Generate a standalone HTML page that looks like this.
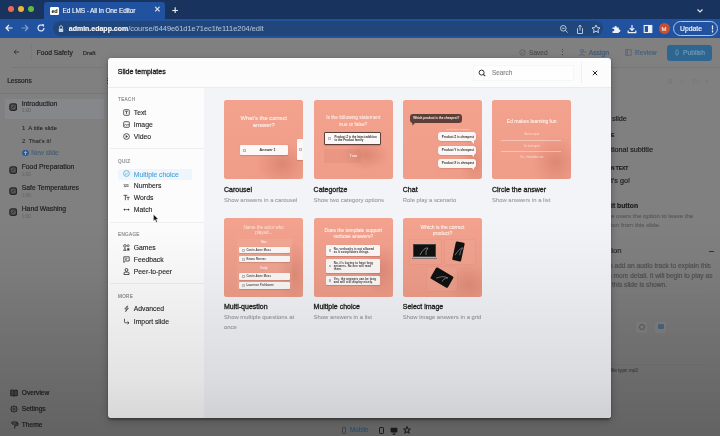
<!DOCTYPE html>
<html><head><meta charset="utf-8">
<style>
*{margin:0;padding:0;box-sizing:border-box}
html,body{width:720px;height:436px;overflow:hidden;background:#888}
body{font-family:"Liberation Sans",sans-serif;position:relative;-webkit-text-stroke:0.18px currentColor}
.a{position:absolute;white-space:nowrap}
#tabs{left:0;top:0;width:720px;height:19px;background:#19335f}
#tab{left:44.3px;top:2.4px;width:121px;height:17.5px;background:#2152a0;border-radius:3px 3px 0 0}
#toolbar{left:0;top:19px;width:720px;height:18.5px;background:#2152a0}
#omni{left:53px;top:21px;width:550px;height:15px;background:#20467a;border-radius:8px}
.dot{width:6.5px;height:6.5px;border-radius:50%;top:5.8px}
#page{left:0;top:37.5px;width:720px;height:399px;background:#808080}
.t{color:#1e1e1e}
.card{border-radius:2.5px;overflow:hidden}
.lab{font-size:4.6px;line-height:6px;color:#8c8f94;letter-spacing:0.35px}
.ns{-webkit-text-stroke:0}
</style></head><body><div id="root" style="position:absolute;left:0;top:0;width:720px;height:436px;overflow:hidden;filter:blur(0.3px)">
<!-- Browser chrome -->
<div class="a" id="tabs"></div>
<div class="a dot" style="left:7.8px;background:#ec6a53"></div>
<div class="a dot" style="left:17.8px;background:#f0b43c"></div>
<div class="a dot" style="left:27.8px;background:#5fb942"></div>
<div class="a" id="tab"></div>
<div class="a ns" style="left:50px;top:6.5px;width:8.6px;height:8.5px;background:#fff;border-radius:1.2px;font-size:5.6px;font-weight:bold;color:#111;line-height:8.5px;text-align:center;letter-spacing:-0.4px">ed</div>
<div class="a" style="left:62.5px;top:5.5px;font-size:6.6px;color:#f4f7fb;line-height:9px;letter-spacing:-0.16px;-webkit-text-stroke:0.12px #f4f7fb">Ed LMS - All In One Editor</div>
<div class="a" style="left:154px;top:5px;font-size:8px;color:#dfe6f2;line-height:10px">&#x2715;</div>
<div class="a" style="left:172px;top:3.5px;font-size:11px;color:#e8eef8;line-height:12px">+</div>
<svg class="a" style="left:696px;top:8px" width="8" height="6" viewBox="0 0 8 6"><path d="M1.5 1.5 L4 4 L6.5 1.5" stroke="#dfe6f2" stroke-width="1.2" fill="none"/></svg>
<div class="a" id="toolbar"></div>
<!-- nav icons -->
<svg class="a" style="left:4px;top:23px" width="10" height="10" viewBox="0 0 10 10"><path d="M8.5 5 H2 M5 2 L2 5 L5 8" stroke="#e6ecf6" stroke-width="1.2" fill="none"/></svg>
<svg class="a" style="left:20px;top:23px" width="10" height="10" viewBox="0 0 10 10"><path d="M1.5 5 H8 M5 2 L8 5 L5 8" stroke="#7f9cc9" stroke-width="1.2" fill="none"/></svg>
<svg class="a" style="left:36px;top:23px" width="10" height="10" viewBox="0 0 10 10"><path d="M8 5 A3 3 0 1 1 6.5 2.4" stroke="#e6ecf6" stroke-width="1.2" fill="none"/><path d="M5.5 1 L8.2 1.6 L7.6 4.2 Z" fill="#e6ecf6"/></svg>
<div class="a" id="omni"></div>
<svg class="a" style="left:58px;top:24.5px" width="6" height="8" viewBox="0 0 6 8"><path d="M1.5 3.5 V2.3 A1.5 1.5 0 0 1 4.5 2.3 V3.5" stroke="#c9d3e4" stroke-width="0.9" fill="none"/><rect x="0.8" y="3.4" width="4.4" height="3.6" rx="0.6" fill="#c9d3e4"/></svg>
<div class="a" style="left:68.75px;top:23.5px;font-size:7px;line-height:10px;color:#f4f7fc"><b>admin.edapp.com</b><span style="color:#b4c3dc;font-size:7.4px;-webkit-text-stroke:0.05px #b4c3dc">/course/6449e61d1e71ec1fe111e204/edit</span></div>
<!-- right toolbar icons -->
<svg class="a" style="left:559px;top:24px" width="10" height="10" viewBox="0 0 10 10"><circle cx="4.3" cy="4.3" r="2.8" stroke="#b8c6de" stroke-width="1" fill="none"/><path d="M6.3 6.3 L8.6 8.6 M3 4.3 H5.6" stroke="#b8c6de" stroke-width="1"/></svg>
<svg class="a" style="left:575px;top:23.5px" width="10" height="11" viewBox="0 0 10 11"><path d="M3 4.5 H2.5 V9.5 H7.5 V4.5 H7 M5 1.2 V6.5 M3.3 2.8 L5 1.2 L6.7 2.8" stroke="#b8c6de" stroke-width="1" fill="none"/></svg>
<svg class="a" style="left:591px;top:23.5px" width="10" height="10" viewBox="0 0 10 10"><path d="M5 1 L6.2 3.6 L9 3.9 L6.9 5.8 L7.5 8.6 L5 7.2 L2.5 8.6 L3.1 5.8 L1 3.9 L3.8 3.6 Z" stroke="#d6deec" stroke-width="0.9" fill="none"/></svg>
<svg class="a" style="left:611px;top:23.5px" width="10" height="10" viewBox="0 0 10 10"><path d="M1.5 3.5 H3.5 A1.2 1.2 0 1 1 5.8 3.5 H7.8 V5.5 A1.2 1.2 0 1 1 7.8 7.8 V9 H1.5 V7 A1.2 1.2 0 1 0 1.5 5 Z" fill="#eef2f8"/></svg>
<svg class="a" style="left:626.5px;top:23.5px" width="10" height="10" viewBox="0 0 10 10"><path d="M5 1 V6.3 M2.8 4.2 L5 6.5 L7.2 4.2 M1.2 6.5 V8.7 H8.8 V6.5" stroke="#eef2f8" stroke-width="1.2" fill="none"/></svg>
<svg class="a" style="left:643px;top:23.5px" width="10" height="10" viewBox="0 0 10 10"><rect x="1.2" y="1.5" width="7.6" height="7" stroke="#eef2f8" stroke-width="1.1" fill="none"/><rect x="5" y="1.5" width="3.8" height="7" fill="#eef2f8"/></svg>
<div class="a" style="left:658.5px;top:22.8px;width:11px;height:11px;border-radius:50%;background:#c9502c;color:#f8e6df;font-size:6px;line-height:12px;text-align:center">M</div>
<div class="a" style="left:673px;top:20.5px;width:45px;height:15px;border-radius:8px;border:1px solid #b5c4dc"></div>
<div class="a" style="left:680px;top:23.5px;font-size:6.8px;line-height:9px;color:#eef2f8">Update</div>
<div class="a" style="left:709px;top:23.5px;font-size:7px;line-height:10px;color:#eef2f8;font-weight:bold">&#x22EE;</div>

<!-- Page (dimmed) -->
<div class="a" id="page"></div>
<!-- page header -->
<svg class="a" style="left:12.5px;top:49px" width="7" height="6" viewBox="0 0 7 6"><path d="M6 3 H1.2 M3.3 1 L1.1 3 L3.3 5" stroke="#2a2a2a" stroke-width="0.8" fill="none"/></svg>
<div class="a" style="left:30.5px;top:44px;width:0.6px;height:16px;background:#7a7a7a"></div>
<div class="a t" style="left:36.7px;top:47.5px;font-size:6.7px;line-height:9px">Food Safety</div>
<div class="a t" style="left:82.8px;top:49.2px;font-size:5.9px;line-height:9px;color:#2a2a2a">Draft</div>
<div class="a" style="left:12px;top:67px;width:90px;height:0.8px;background:#777"></div>
<div class="a t" style="left:7.2px;top:76px;font-size:6.6px;line-height:9px">Lessons</div>
<div class="a" style="left:103.8px;top:76.5px;font-size:7px;line-height:8px;color:#333">&#x22EE;</div>
<div class="a" style="left:0;top:93.3px;width:106px;height:0.8px;background:#777"></div>
<!-- lessons -->
<div class="a" style="left:5px;top:98.5px;width:99px;height:20px;background:#85878a"></div>
<svg class="a" style="left:8.8px;top:102.6px" width="8.4" height="8" viewBox="0 0 8.4 8"><rect x="0.9" y="0.9" width="6.6" height="6.4" rx="1.8" stroke="#262626" stroke-width="1.3" fill="#555"/><path d="M2.8 5.3 L5.6 2.5" stroke="#262626" stroke-width="0.9"/></svg>
<div class="a t" style="left:21.7px;top:99.9px;font-size:6.8px;line-height:8px">Introduction</div>
<div class="a" style="left:21.7px;top:108.4px;font-size:4.8px;line-height:6px;color:#6c6c6c">1:00</div>
<div class="a t" style="left:22px;top:123.6px;font-size:6px;line-height:8px;-webkit-text-stroke:0.05px currentColor">1&nbsp; A title slide</div>
<div class="a t" style="left:22px;top:136.6px;font-size:6px;line-height:8px;-webkit-text-stroke:0.05px currentColor">2&nbsp; That's it!</div>
<div class="a" style="left:21.8px;top:149.5px;width:6.8px;height:6.8px;border-radius:50%;background:#2c5c98"></div><div class="a" style="left:24.7px;top:151.2px;width:1px;height:3.4px;background:#8aa6c6"></div><div class="a" style="left:23.5px;top:152.4px;width:3.4px;height:1px;background:#8aa6c6"></div>
<div class="a" style="left:31.3px;top:149px;font-size:6.3px;line-height:8px;color:#4b5f78">New slide</div>
<svg class="a" style="left:8.8px;top:165.7px" width="8.4" height="8" viewBox="0 0 8.4 8"><rect x="0.9" y="0.9" width="6.6" height="6.4" rx="1.8" stroke="#262626" stroke-width="1.3" fill="#555"/><path d="M2.8 5.3 L5.6 2.5" stroke="#262626" stroke-width="0.9"/></svg>
<div class="a t" style="left:21.7px;top:163.0px;font-size:6.8px;line-height:8px">Food Preparation</div>
<div class="a" style="left:21.7px;top:171.5px;font-size:4.8px;line-height:6px;color:#6c6c6c">1:00</div>
<svg class="a" style="left:8.8px;top:186.7px" width="8.4" height="8" viewBox="0 0 8.4 8"><rect x="0.9" y="0.9" width="6.6" height="6.4" rx="1.8" stroke="#262626" stroke-width="1.3" fill="#555"/><path d="M2.8 5.3 L5.6 2.5" stroke="#262626" stroke-width="0.9"/></svg>
<div class="a t" style="left:21.7px;top:184.0px;font-size:6.8px;line-height:8px">Safe Temperatures</div>
<div class="a" style="left:21.7px;top:192.5px;font-size:4.8px;line-height:6px;color:#6c6c6c">1:00</div>
<svg class="a" style="left:8.8px;top:207.7px" width="8.4" height="8" viewBox="0 0 8.4 8"><rect x="0.9" y="0.9" width="6.6" height="6.4" rx="1.8" stroke="#262626" stroke-width="1.3" fill="#555"/><path d="M2.8 5.3 L5.6 2.5" stroke="#262626" stroke-width="0.9"/></svg>
<div class="a t" style="left:21.7px;top:205.0px;font-size:6.8px;line-height:8px">Hand Washing</div>
<div class="a" style="left:21.7px;top:213.5px;font-size:4.8px;line-height:6px;color:#6c6c6c">1:00</div>

<svg class="a" style="left:10px;top:388.8px" width="8" height="8" viewBox="0 0 8 8"><path d="M0.7 1.2 Q2.3 0.6 4 1.6 Q5.7 0.6 7.3 1.2 V6.8 Q5.7 6.2 4 7.2 Q2.3 6.2 0.7 6.8 Z M4 1.6 V7.2" stroke="#262626" stroke-width="0.9" fill="#4a4a4a"/></svg>
<div class="a t" style="left:21.8px;top:389px;font-size:6.6px;line-height:8px">Overview</div>
<svg class="a" style="left:10px;top:405.3px" width="8" height="8" viewBox="0 0 8 8"><path d="M4 0.6 L5 1.9 L6.6 1.7 L6.4 3.3 L7.5 4 L6.4 4.7 L6.6 6.3 L5 6.1 L4 7.4 L3 6.1 L1.4 6.3 L1.6 4.7 L0.5 4 L1.6 3.3 L1.4 1.7 L3 1.9 Z" stroke="#262626" stroke-width="0.9" fill="none"/><circle cx="4" cy="4" r="1.1" stroke="#262626" stroke-width="0.8" fill="none"/></svg>
<div class="a t" style="left:21.8px;top:405px;font-size:6.6px;line-height:8px">Settings</div>
<svg class="a" style="left:10.5px;top:421px" width="8" height="8" viewBox="0 0 8 8"><path d="M1 1 H6 V3 H1 Z M6 2 H7 V4.3 H3.8 V7.5" stroke="#262626" stroke-width="1" fill="none"/></svg>
<div class="a t" style="left:21.8px;top:421px;font-size:6.6px;line-height:8px">Theme</div>
<!-- header right -->
<svg class="a" style="left:518.5px;top:48.8px" width="7" height="7" viewBox="0 0 7 7"><circle cx="3.5" cy="3.5" r="2.8" stroke="#5a5a5a" stroke-width="0.7" fill="none"/><path d="M2 3.6 L3.1 4.6 L5 2.6" stroke="#5a5a5a" stroke-width="0.7" fill="none"/></svg>
<div class="a" style="left:529px;top:49.2px;font-size:6.6px;line-height:8px;color:#4a4a4a;-webkit-text-stroke:0.1px #4a4a4a">Saved</div>
<div class="a" style="left:559px;top:48px;font-size:7px;line-height:8px;color:#3a3a3a">&#x22EE;</div>
<svg class="a" style="left:578.5px;top:49px" width="8" height="7" viewBox="0 0 8 7"><circle cx="3" cy="2" r="1.5" stroke="#3f5c7a" stroke-width="0.7" fill="none"/><path d="M0.5 6.5 Q3 3.5 5.5 6.5 M5.5 3 H7.5" stroke="#3f5c7a" stroke-width="0.7" fill="none"/></svg>
<div class="a" style="left:588.7px;top:49px;font-size:6.8px;line-height:8px;color:#3f5a78">Assign</div>
<svg class="a" style="left:625px;top:49px" width="7" height="7" viewBox="0 0 7 7"><rect x="0.8" y="0.8" width="5.4" height="5.4" stroke="#46607c" stroke-width="0.7" fill="none"/><path d="M2.3 0.8 V6.2" stroke="#46607c" stroke-width="0.7"/></svg>
<div class="a" style="left:635px;top:49px;font-size:6.6px;line-height:8px;color:#46607c">Review</div>
<div class="a" style="left:667px;top:44.6px;width:45px;height:16px;border-radius:3px;background:#2c6691"></div>
<svg class="a" style="left:673.5px;top:49px" width="6" height="7" viewBox="0 0 6 7"><path d="M3 0.5 Q5.5 2.5 3.8 6 H2.2 Q0.5 2.5 3 0.5 Z" stroke="#7fa3c0" stroke-width="0.6" fill="none"/></svg>
<div class="a" style="left:683px;top:49px;font-size:6.7px;line-height:8px;color:#759cba">Publish</div>
<div class="a" style="left:607px;top:67px;width:113px;height:0.8px;background:#777"></div>
<!-- right panel fragments -->
<div class="a" style="left:668px;top:77.5px;font-size:6.5px;line-height:8px;color:#7a7a7a;font-weight:bold">B</div>
<div class="a" style="left:681px;top:77.5px;font-size:6.5px;line-height:8px;color:#7a7a7a;font-style:italic">I</div>
<div class="a" style="left:692px;top:77.5px;font-size:6.5px;line-height:8px;color:#7a7a7a">T<span style="font-size:5px">T</span></div>
<div class="a" style="left:705px;top:77.5px;font-size:6.5px;line-height:8px;color:#7a7a7a">&#x2261;</div>
<div class="a t" style="left:612px;top:114.6px;font-size:7.2px;line-height:8px">slide</div>
<div class="a t" style="left:611px;top:131.5px;font-size:5px;line-height:7px;font-weight:bold">E</div>
<div class="a t" style="left:611px;top:145.6px;font-size:7.2px;line-height:8px">tional subtitle</div>
<div class="a t" style="left:611px;top:165px;font-size:4.8px;line-height:7px;font-weight:bold">N TEXT</div>
<div class="a t" style="left:611px;top:176.6px;font-size:7.2px;line-height:8px">t's go!</div>
<div class="a t" style="left:611px;top:202px;font-size:6.8px;line-height:8px;font-weight:bold">it button</div>
<div class="a" style="left:611px;top:212px;font-size:6.15px;line-height:8px;color:#5c5c5c">e users the option to leave the</div>
<div class="a" style="left:611px;top:221px;font-size:6.15px;line-height:8px;color:#5c5c5c">ion from this slide.</div>
<div class="a t" style="left:609px;top:246px;font-size:7.8px;line-height:9px;-webkit-text-stroke:0.1px currentColor">tion</div>
<div class="a" style="left:709px;top:250.5px;width:5px;height:0.9px;background:#333"></div>
<div class="a" style="left:609px;top:262.3px;font-size:6.6px;line-height:8px;color:#505050">o add an audio track to explain this</div>
<div class="a" style="left:608px;top:271.8px;font-size:6.6px;line-height:8px;color:#505050">n more detail. It will begin to play as</div>
<div class="a" style="left:612px;top:280.5px;font-size:6.6px;line-height:8px;color:#505050">this slide is shown.</div>
<div class="a" style="left:611px;top:292px;width:98px;height:73px;border:0.6px solid #7c7c7c;border-left:none;border-top-color:#828282;border-right-color:#808080"></div><div class="a" style="left:636px;top:322px;width:11px;height:11px;background:rgba(255,255,255,0.05);border-radius:1px"></div><div class="a" style="left:655px;top:322px;width:11px;height:11px;background:rgba(255,255,255,0.05);border-radius:1px"></div>
<div class="a" style="left:639px;top:324px;width:6px;height:6px;border-radius:50%;border:0.6px solid #5a5a5a"></div>
<div class="a" style="left:658px;top:324px;width:6px;height:5px;background:#4f6a80;border-radius:1px"></div>
<div class="a" style="left:611px;top:367.5px;font-size:4.5px;line-height:6px;color:#505050">file type: mp3</div>
<!-- bottom device bar -->
<div class="a" style="left:342px;top:427px;width:4px;height:7px;border:0.6px solid #555;border-radius:1px"></div>
<div class="a" style="left:350px;top:426px;font-size:6.3px;line-height:8px;color:#3d6587;-webkit-text-stroke:0.15px #3d6587">Mobile</div>
<div class="a" style="left:379px;top:427px;width:5px;height:7px;border:0.9px solid #222;border-radius:1.2px"></div>
<svg class="a" style="left:389.5px;top:426.5px" width="8" height="8" viewBox="0 0 8 8"><rect x="0.6" y="0.8" width="6.8" height="4.6" rx="0.8" fill="#222"/><path d="M4 5.4 V7 M2.5 7.3 H5.5" stroke="#222" stroke-width="0.9"/></svg>
<svg class="a" style="left:402.5px;top:426px" width="8" height="8" viewBox="0 0 10 10"><path d="M5 1 L6.2 3.6 L9 3.9 L6.9 5.8 L7.5 8.6 L5 7.2 L2.5 8.6 L3.1 5.8 L1 3.9 L3.8 3.6 Z" stroke="#222" stroke-width="1.3" fill="none"/></svg>



<div class="a" style="left:0;top:37.5px;width:720px;height:399px;pointer-events:none;background:linear-gradient(to bottom, rgba(0,0,0,0) 0%, rgba(0,0,0,0) 45%, rgba(0,0,0,0.03) 57%, rgba(0,0,0,0.12) 75%, rgba(0,0,0,0.21) 95%, rgba(0,0,0,0.23) 100%)"></div>


<!-- MODAL -->
<div class="a" id="modal" style="left:108px;top:58px;width:503px;height:360px;background:#fcfcfd;border-radius:3px;box-shadow:0 1.5px 2px rgba(0,0,0,0.3), 0 2px 8px rgba(0,0,0,0.25);overflow:hidden">
  <div class="a" style="left:96px;top:29px;width:407px;height:331px;background:#f2f4f7"></div>
  <div class="a" style="left:0;top:28.6px;width:503px;height:0.8px;background:#e9ebee"></div>
  <div class="a" style="left:2px;top:90.2px;width:94px;height:0.8px;background:#eceef0"></div>
  <div class="a" style="left:2px;top:164.2px;width:94px;height:0.8px;background:#eceef0"></div>
  <div class="a" style="left:2px;top:225.4px;width:94px;height:0.8px;background:#eceef0"></div>
</div>
<div class="a" style="left:117.8px;top:67.2px;font-size:7px;line-height:9px;color:#1f1f1f;-webkit-text-stroke:0.32px #1f1f1f">Slide templates</div>
<div class="a" style="left:472.5px;top:64.5px;width:101px;height:16px;border:0.7px solid #f5f6f7;border-radius:2px;background:#fefefe;box-shadow:0 0 1px rgba(0,0,0,0.03)"></div>
<svg class="a" style="left:478px;top:68.5px" width="8" height="8" viewBox="0 0 8 8"><circle cx="3.6" cy="3.6" r="2.5" stroke="#333" stroke-width="1" fill="none"/><path d="M5.4 5.4 L7.2 7.2" stroke="#333" stroke-width="1.1"/></svg>
<div class="a" style="left:492px;top:68px;font-size:6.4px;line-height:9px;color:#8a8d92">Search</div>
<div class="a" style="left:581px;top:62px;width:0.7px;height:21px;background:#eef0f2"></div>
<svg class="a" style="left:591.5px;top:69.5px" width="6" height="6" viewBox="0 0 6 6"><path d="M0.8 0.8 L5.2 5.2 M5.2 0.8 L0.8 5.2" stroke="#2a2a2a" stroke-width="1"/></svg>


<!-- CARDS -->
<div class="a card ns" style="left:224px;top:100.4px;width:79.4px;height:78.7px;background:radial-gradient(ellipse 26px 22px at 58px 64px, rgba(190,100,82,0.4), rgba(190,100,82,0) 100%), linear-gradient(#f3a28e,#ef9d89)"><div class="a" style="left:0px;top:14.2px;width:79.4px;text-align:center;font-size:5.8px;line-height:7.25px;color:rgba(255,244,240,0.95);white-space:normal;-webkit-text-stroke:0.1px rgba(255,244,240,0.95)">What's the correct<br>answer?</div><div class="a" style="left:15.6px;top:45px;width:48.4px;height:9.8px;background:#fbf8f7;border-radius:1px;box-shadow:0 0.5px 1px rgba(120,60,50,0.25);"><div class="a" style="left:3px;top:3.2px;width:3px;height:3px;border:0.4px solid #bbb"></div><div class="a" style="left:4px;top:2.2px;width:48px;text-align:center;font-size:3.6px;line-height:5px;font-weight:bold;color:#333">Answer 1</div></div><div class="a" style="left:72.7px;top:39px;width:8px;height:20.4px;background:#fbf8f7;border-radius:1px;box-shadow:0 0.5px 1px rgba(120,60,50,0.25);"><div class="a" style="left:2.5px;top:8.5px;width:3px;height:3px;border:0.4px solid #bbb"></div></div></div>
<div class="a card ns" style="left:313.6px;top:100.4px;width:79.4px;height:78.7px;background:radial-gradient(ellipse 24px 15px at 52px 55px, rgba(190,100,82,0.4), rgba(190,100,82,0) 100%), linear-gradient(#f3a28e,#ef9d89)"><div class="a" style="left:0px;top:14.8px;width:79.4px;text-align:center;font-size:4.8px;line-height:6.4px;color:rgba(255,244,240,0.95);white-space:normal;-webkit-text-stroke:0.05px rgba(255,244,240,0.95)">Is the following statement<br>true or false?</div><div class="a" style="left:10.5px;top:48.6px;width:37px;height:14px;background:rgba(200,110,95,0.16);filter:blur(0.5px)"></div><div class="a" style="left:0px;top:53.6px;width:79.4px;text-align:center;font-size:3.8px;line-height:4.75px;color:rgba(255,235,230,0.9);white-space:normal;-webkit-text-stroke:0.1px rgba(255,235,230,0.9)">True</div><div class="a" style="left:10.9px;top:32.1px;width:57px;height:12.7px;background:#fbf8f7;border-radius:1px;box-shadow:0 0.5px 1px rgba(120,60,50,0.25);border:0.9px solid #5b3f38"><div class="a" style="left:3px;top:4px;width:3px;height:3px;border:0.4px solid #bbb"></div><div class="a" style="left:9px;top:2.2px;font-size:2.9px;line-height:3.6px;font-weight:bold;color:#333;white-space:normal;width:44px">Product Z is the latest addition to the Product family</div></div></div>
<div class="a card ns" style="left:402.8px;top:100.4px;width:79.4px;height:78.7px;background:radial-gradient(ellipse 16px 28px at 72px 62px, rgba(190,100,82,0.3), rgba(190,100,82,0) 100%), linear-gradient(#f3a28e,#ef9d89)"><div class="a" style="left:7.3px;top:13.4px;width:51.5px;height:9px;background:#5e3f37;border-radius:3px"></div><svg class="a" style="left:9px;top:22px" width="4" height="4" viewBox="0 0 4 4"><path d="M0 0 H4 L0.5 3.5 Z" fill="#5e3f37"/></svg><div class="a" style="left:10.5px;top:15.5px;font-size:3.05px;line-height:5px;color:#f5e8e4;font-weight:bold">Which product is the cheapest?</div><div class="a" style="left:43px;top:27.5px;font-size:2.4px;line-height:3px;color:rgba(255,240,235,0.8)">What Z three available</div><div class="a" style="left:35.6px;top:32px;width:37.3px;height:9px;background:#fbf6f4;border-radius:3px;box-shadow:0 0.5px 1px rgba(120,60,50,0.3)"></div><svg class="a" style="left:68px;top:40.5px" width="3" height="3" viewBox="0 0 3 3"><path d="M0 0 H3 V3 Z" fill="#fbf6f4"/></svg><div class="a" style="left:35.6px;top:45.2px;width:37.3px;height:9px;background:#fbf6f4;border-radius:3px;box-shadow:0 0.5px 1px rgba(120,60,50,0.3)"></div><svg class="a" style="left:68px;top:53.7px" width="3" height="3" viewBox="0 0 3 3"><path d="M0 0 H3 V3 Z" fill="#fbf6f4"/></svg><div class="a" style="left:35.6px;top:58.4px;width:37.3px;height:9px;background:#fbf6f4;border-radius:3px;box-shadow:0 0.5px 1px rgba(120,60,50,0.3)"></div><svg class="a" style="left:68px;top:66.9px" width="3" height="3" viewBox="0 0 3 3"><path d="M0 0 H3 V3 Z" fill="#fbf6f4"/></svg><div class="a" style="left:39px;top:34.2px;font-size:3.1px;line-height:4.5px;color:#333;font-weight:bold">Product Z is cheapest</div><div class="a" style="left:39px;top:47.400000000000006px;font-size:3.1px;line-height:4.5px;color:#333;font-weight:bold">Product Y is cheapest</div><div class="a" style="left:39px;top:60.6px;font-size:3.1px;line-height:4.5px;color:#333;font-weight:bold">Product X is cheapest</div></div>
<div class="a card ns" style="left:492px;top:100.4px;width:79.4px;height:78.7px;background:radial-gradient(ellipse 24px 26px at 64px 62px, rgba(190,100,82,0.38), rgba(190,100,82,0) 100%), linear-gradient(#f3a28e,#ef9d89)"><div class="a" style="left:0px;top:17.3px;width:79.4px;text-align:center;font-size:5.0px;line-height:6.25px;color:rgba(255,244,240,0.95);white-space:normal;-webkit-text-stroke:0.1px rgba(255,244,240,0.95)">Ed makes learning fun</div><div class="a" style="left:0px;top:32.3px;width:79.4px;text-align:center;font-size:2.6px;line-height:3.25px;color:rgba(255,240,235,0.75);white-space:normal;-webkit-text-stroke:0px rgba(255,240,235,0.75)">Start a report</div><div class="a" style="left:9px;top:39.4px;width:60px;height:0.5px;background:rgba(255,240,235,0.45)"></div><div class="a" style="left:0px;top:44.3px;width:79.4px;text-align:center;font-size:2.6px;line-height:3.25px;color:rgba(255,240,235,0.75);white-space:normal;-webkit-text-stroke:0px rgba(255,240,235,0.75)">I'm next again</div><div class="a" style="left:9px;top:50.4px;width:60px;height:0.5px;background:rgba(255,240,235,0.45)"></div><div class="a" style="left:0px;top:56.1px;width:79.4px;text-align:center;font-size:2.6px;line-height:3.25px;color:rgba(255,240,235,0.75);white-space:normal;-webkit-text-stroke:0px rgba(255,240,235,0.75)">Yes, I remember too</div></div>
<div class="a card ns" style="left:224px;top:218px;width:79.4px;height:79.2px;background:radial-gradient(ellipse 18px 30px at 70px 55px, rgba(190,100,82,0.3), rgba(190,100,82,0) 100%), linear-gradient(#f3a28e,#ef9d89)"><div class="a" style="left:0px;top:6.5px;width:79.4px;text-align:center;font-size:4.5px;line-height:5.625px;color:rgba(255,240,235,0.85);white-space:normal;-webkit-text-stroke:0px rgba(255,240,235,0.85)">Name the actor who<br>played...</div><div class="a" style="left:13.2px;top:21.2px;width:54.4px;height:50.5px;background:rgba(255,225,215,0.1);border-radius:1px"></div><div class="a" style="left:0px;top:22.8px;width:79.4px;text-align:center;font-size:2.8px;line-height:3.5px;color:rgba(255,240,235,0.9);white-space:normal;-webkit-text-stroke:0.1px rgba(255,240,235,0.9)">Neo</div><div class="a" style="left:0px;top:48.8px;width:79.4px;text-align:center;font-size:2.8px;line-height:3.5px;color:rgba(255,240,235,0.9);white-space:normal;-webkit-text-stroke:0.1px rgba(255,240,235,0.9)">Trinity</div><div class="a" style="left:14.8px;top:28.9px;width:50.8px;height:6.6px;background:#fbf8f7;border-radius:1px;box-shadow:0 0.5px 1px rgba(120,60,50,0.25);"><div class="a" style="left:2.8px;top:1.8px;width:3px;height:3px;border:0.4px solid #c4c0bf;background:#f1eeed"></div><div class="a" style="left:7.6px;top:0.7px;height:6.6px;display:flex;align-items:center;font-size:2.7px;line-height:3.5px;font-weight:bold;color:#4a4a4a;letter-spacing:0.1px">Carrie-Anne Moss</div></div><div class="a" style="left:14.8px;top:37.8px;width:50.8px;height:6.6px;background:#fbf8f7;border-radius:1px;box-shadow:0 0.5px 1px rgba(120,60,50,0.25);"><div class="a" style="left:2.8px;top:1.8px;width:3px;height:3px;border:0.4px solid #c4c0bf;background:#f1eeed"></div><div class="a" style="left:7.6px;top:0.7px;height:6.6px;display:flex;align-items:center;font-size:2.7px;line-height:3.5px;font-weight:bold;color:#4a4a4a;letter-spacing:0.1px">Keanu Reeves</div></div><div class="a" style="left:14.8px;top:55px;width:50.8px;height:6.6px;background:#fbf8f7;border-radius:1px;box-shadow:0 0.5px 1px rgba(120,60,50,0.25);"><div class="a" style="left:2.8px;top:1.8px;width:3px;height:3px;border:0.4px solid #c4c0bf;background:#f1eeed"></div><div class="a" style="left:7.6px;top:0.7px;height:6.6px;display:flex;align-items:center;font-size:2.7px;line-height:3.5px;font-weight:bold;color:#4a4a4a;letter-spacing:0.1px">Carrie-Anne Moss</div></div><div class="a" style="left:14.8px;top:64px;width:50.8px;height:6.6px;background:#fbf8f7;border-radius:1px;box-shadow:0 0.5px 1px rgba(120,60,50,0.25);"><div class="a" style="left:2.8px;top:1.8px;width:3px;height:3px;border:0.4px solid #c4c0bf;background:#f1eeed"></div><div class="a" style="left:7.6px;top:0.7px;height:6.6px;display:flex;align-items:center;font-size:2.7px;line-height:3.5px;font-weight:bold;color:#4a4a4a;letter-spacing:0.1px">Laurence Fishburne</div></div></div>
<div class="a card ns" style="left:313.6px;top:218px;width:79.4px;height:79.2px;background:radial-gradient(ellipse 20px 26px at 68px 52px, rgba(190,100,82,0.3), rgba(190,100,82,0) 100%), linear-gradient(#f3a28e,#ef9d89)"><div class="a" style="left:0px;top:9.6px;width:79.4px;text-align:center;font-size:4.9px;line-height:6.125px;color:rgba(255,244,240,0.95);white-space:normal;-webkit-text-stroke:0.1px rgba(255,244,240,0.95)">Does the template support<br>verbose answers?</div><div class="a" style="left:12.2px;top:26.7px;width:54.2px;height:11.7px;background:#fbf8f7;border-radius:1px;box-shadow:0 0.5px 1px rgba(120,60,50,0.25);"><div class="a" style="left:3px;top:4.35px;width:2.6px;height:2.6px;border:0.35px solid #bbb;background:#f3f0ef"></div><div class="a" style="left:8px;top:0.5px;height:11.7px;width:43px;display:flex;align-items:center;font-size:2.85px;line-height:3.3px;font-weight:bold;color:#3a3a3a;white-space:normal;letter-spacing:0.1px">No, verbosity is not allowed as it complicates things.</div></div><div class="a" style="left:12.2px;top:41px;width:54.2px;height:14px;background:#fbf8f7;border-radius:1px;box-shadow:0 0.5px 1px rgba(120,60,50,0.25);"><div class="a" style="left:3px;top:5.5px;width:2.6px;height:2.6px;border:0.35px solid #bbb;background:#f3f0ef"></div><div class="a" style="left:8px;top:0.5px;height:14px;width:43px;display:flex;align-items:center;font-size:2.85px;line-height:3.3px;font-weight:bold;color:#3a3a3a;white-space:normal;letter-spacing:0.1px">No, it's boring to have long answers. No one will read them.</div></div><div class="a" style="left:12.2px;top:57.6px;width:54.2px;height:9.8px;background:#fbf8f7;border-radius:1px;box-shadow:0 0.5px 1px rgba(120,60,50,0.25);"><div class="a" style="left:3px;top:3.4000000000000004px;width:2.6px;height:2.6px;border:0.35px solid #bbb;background:#f3f0ef"></div><div class="a" style="left:8px;top:0.5px;height:9.8px;width:43px;display:flex;align-items:center;font-size:2.85px;line-height:3.3px;font-weight:bold;color:#3a3a3a;white-space:normal;letter-spacing:0.1px">Yes, the answers can be long and will still display nicely.</div></div></div>
<div class="a card ns" style="left:402.8px;top:218px;width:79.4px;height:79.2px;background:radial-gradient(ellipse 24px 20px at 66px 66px, rgba(190,100,82,0.3), rgba(190,100,82,0) 100%), linear-gradient(#f3a28e,#ef9d89)"><div class="a" style="left:0px;top:5.7px;width:79.4px;text-align:center;font-size:5.0px;line-height:6.25px;color:rgba(255,244,240,0.95);white-space:normal;-webkit-text-stroke:0.1px rgba(255,244,240,0.95)">Which is the correct<br>product?</div><div class="a" style="left:7px;top:21.8px;width:31px;height:24.7px;background:rgba(240,170,150,0.35);box-shadow:0 0 0 0.3px rgba(200,120,105,0.3)"></div><div class="a" style="left:42px;top:21.8px;width:30px;height:24.7px;background:rgba(240,170,150,0.35);box-shadow:0 0 0 0.3px rgba(200,120,105,0.3)"></div><div class="a" style="left:24.5px;top:48.5px;width:30.2px;height:24.2px;background:rgba(240,170,150,0.35);box-shadow:0 0 0 0.3px rgba(200,120,105,0.3)"></div><div class="a" style="left:10.3px;top:25.7px;width:22.8px;height:13.7px;background:#111;border:0.5px solid #444"></div><div class="a" style="left:9px;top:39.6px;width:25.5px;height:1.6px;background:#8a7a78"></div><svg class="a" style="left:14px;top:27px" width="14" height="11" viewBox="0 0 14 11"><path d="M3 10 Q7 2 11 3 Q8 6 9 10" stroke="#ddd" stroke-width="0.5" fill="none"/></svg><div class="a" style="left:51.4px;top:23.7px;width:9.4px;height:18.5px;background:#111;border-radius:1.2px;transform:rotate(12deg)"></div><div class="a" style="left:29.5px;top:53px;width:19.5px;height:13px;background:#111;border-radius:1.2px;transform:rotate(30deg)"></div><svg class="a" style="left:51px;top:26px" width="10" height="14" viewBox="0 0 10 14"><path d="M2 12 Q5 4 8 3 Q6 7 6.5 11" stroke="#bbb" stroke-width="0.5" fill="none" transform="rotate(12 5 7)"/></svg><svg class="a" style="left:31px;top:54px" width="16" height="12" viewBox="0 0 16 12"><path d="M3 9 Q8 3 13 3 Q9 6 10 9" stroke="#bbb" stroke-width="0.5" fill="none" transform="rotate(30 8 6)"/></svg></div>
<div class="a" style="left:224px;top:185.89999999999998px;font-size:7px;line-height:8px;color:#1f1f1f;-webkit-text-stroke:0.32px #1f1f1f">Carousel</div>
<div class="a" style="left:224px;top:195.89999999999998px;font-size:5.9px;line-height:9.8px;color:#9a9da1;-webkit-text-stroke:0.1px #9a9da1">Show answers in a carousel</div>
<div class="a" style="left:313.6px;top:185.89999999999998px;font-size:7px;line-height:8px;color:#1f1f1f;-webkit-text-stroke:0.32px #1f1f1f">Categorize</div>
<div class="a" style="left:313.6px;top:195.89999999999998px;font-size:5.9px;line-height:9.8px;color:#9a9da1;-webkit-text-stroke:0.1px #9a9da1">Show two category options</div>
<div class="a" style="left:402.8px;top:185.89999999999998px;font-size:7px;line-height:8px;color:#1f1f1f;-webkit-text-stroke:0.32px #1f1f1f">Chat</div>
<div class="a" style="left:402.8px;top:195.89999999999998px;font-size:5.9px;line-height:9.8px;color:#9a9da1;-webkit-text-stroke:0.1px #9a9da1">Role play a scenario</div>
<div class="a" style="left:492px;top:185.89999999999998px;font-size:7px;line-height:8px;color:#1f1f1f;-webkit-text-stroke:0.32px #1f1f1f">Circle the answer</div>
<div class="a" style="left:492px;top:195.89999999999998px;font-size:5.9px;line-height:9.8px;color:#9a9da1;-webkit-text-stroke:0.1px #9a9da1">Show answers in a list</div>
<div class="a" style="left:224px;top:303.3px;font-size:7px;line-height:8px;color:#1f1f1f;-webkit-text-stroke:0.32px #1f1f1f">Multi-question</div>
<div class="a" style="left:224px;top:313.3px;font-size:5.9px;line-height:9.8px;color:#9a9da1;-webkit-text-stroke:0.1px #9a9da1">Show multiple questions at<br>once</div>
<div class="a" style="left:313.6px;top:303.3px;font-size:7px;line-height:8px;color:#1f1f1f;-webkit-text-stroke:0.32px #1f1f1f">Multiple choice</div>
<div class="a" style="left:313.6px;top:313.3px;font-size:5.9px;line-height:9.8px;color:#9a9da1;-webkit-text-stroke:0.1px #9a9da1">Show answers in a list</div>
<div class="a" style="left:402.8px;top:303.3px;font-size:7px;line-height:8px;color:#1f1f1f;-webkit-text-stroke:0.32px #1f1f1f">Select image</div>
<div class="a" style="left:402.8px;top:313.3px;font-size:5.9px;line-height:9.8px;color:#9a9da1;-webkit-text-stroke:0.1px #9a9da1">Show image answers in a grid</div>

<!-- modal sidebar -->
<div class="a lab" style="left:118px;top:96.9px">TEACH</div>
<div class="a lab" style="left:118px;top:159.2px">QUIZ</div>
<div class="a lab" style="left:118px;top:232.3px">ENGAGE</div>
<div class="a lab" style="left:118px;top:294.0px">MORE</div>
<div class="a" style="left:117.8px;top:169.2px;width:74px;height:10.5px;background:#edf6fc;border-radius:2px"></div>
<svg class="a" style="left:122.5px;top:109.0px" width="7" height="7" viewBox="0 0 7 7"><rect x="0.7" y="0.7" width="5.6" height="5.6" rx="0.8" stroke="#333" stroke-width="0.8" fill="none"/><path d="M2.2 2.3 H4.8 M3.5 2.3 V5" stroke="#333" stroke-width="0.8"/></svg>
<div class="a" style="left:133.8px;top:109.1px;font-size:6.8px;line-height:8px;color:#222;-webkit-text-stroke:0.1px #222">Text</div>
<svg class="a" style="left:122.5px;top:120.8px" width="7" height="7" viewBox="0 0 7 7"><rect x="0.7" y="0.7" width="5.6" height="5.6" rx="0.8" stroke="#333" stroke-width="0.8" fill="none"/><path d="M0.8 4.8 L2.5 3.3 L4 4.5 M3.8 3.8 H6.2" stroke="#333" stroke-width="0.7" fill="none"/></svg>
<div class="a" style="left:133.8px;top:120.89999999999999px;font-size:6.8px;line-height:8px;color:#222;-webkit-text-stroke:0.1px #222">Image</div>
<svg class="a" style="left:122.5px;top:132.7px" width="7" height="7" viewBox="0 0 7 7"><circle cx="3.5" cy="3.5" r="2.9" stroke="#333" stroke-width="0.8" fill="none"/><path d="M2.7 2.1 L5 3.5 L2.7 4.9 Z" fill="#333"/></svg>
<div class="a" style="left:133.8px;top:132.8px;font-size:6.8px;line-height:8px;color:#222;-webkit-text-stroke:0.1px #222">Video</div>
<svg class="a" style="left:122.5px;top:170.39999999999998px" width="7" height="7" viewBox="0 0 7 7"><circle cx="3.5" cy="3.5" r="2.9" stroke="#5aa7d8" stroke-width="0.8" fill="none"/><path d="M2 3.6 L3.1 4.6 L5 2.6" stroke="#5aa7d8" stroke-width="0.8" fill="none"/></svg>
<div class="a" style="left:133.8px;top:170.5px;font-size:6.8px;line-height:8px;color:#4ea0d8;-webkit-text-stroke:0.1px #4ea0d8">Multiple choice</div>
<svg class="a" style="left:122.5px;top:182.29999999999998px" width="7" height="7" viewBox="0 0 7 7"><text x="0.3" y="4.6" font-size="3.3" font-family="Liberation Sans" font-weight="bold" fill="#333" letter-spacing="-0.1">123</text></svg>
<div class="a" style="left:133.8px;top:182.4px;font-size:6.8px;line-height:8px;color:#222;-webkit-text-stroke:0.1px #222">Numbers</div>
<svg class="a" style="left:122.5px;top:194.2px" width="7" height="7" viewBox="0 0 7 7"><path d="M0.5 1.3 H4.3 M2.4 1.3 V6.2 M3.6 3.3 H6.6 M5.1 3.3 V6.2" stroke="#333" stroke-width="0.8" fill="none"/></svg>
<div class="a" style="left:133.8px;top:194.3px;font-size:6.8px;line-height:8px;color:#222;-webkit-text-stroke:0.1px #222">Words</div>
<svg class="a" style="left:122.5px;top:206.2px" width="7" height="7" viewBox="0 0 7 7"><path d="M1.2 3.6 H5.8" stroke="#333" stroke-width="0.7"/><path d="M0.3 3.6 L2 2.4 V4.8 Z M6.7 3.6 L5 2.4 V4.8 Z" fill="#333"/></svg>
<div class="a" style="left:133.8px;top:206.3px;font-size:6.8px;line-height:8px;color:#222;-webkit-text-stroke:0.1px #222">Match</div>
<svg class="a" style="left:122.5px;top:244.2px" width="7" height="7" viewBox="0 0 7 7"><circle cx="1.9" cy="1.9" r="1.3" stroke="#333" stroke-width="0.8" fill="none"/><circle cx="5.2" cy="1.7" r="1" stroke="#333" stroke-width="0.7" fill="none"/><path d="M0.6 6.6 L1.9 4.2 L3.2 6.6 Z" stroke="#333" stroke-width="0.7" fill="none"/><rect x="4.2" y="4.3" width="2.2" height="2.2" fill="#333"/></svg>
<div class="a" style="left:133.8px;top:244.3px;font-size:6.8px;line-height:8px;color:#222;-webkit-text-stroke:0.1px #222">Games</div>
<svg class="a" style="left:122.5px;top:256.0px" width="7" height="7" viewBox="0 0 7 7"><path d="M0.8 0.8 H6.2 V5 H2.5 L0.8 6.5 Z" stroke="#333" stroke-width="0.8" fill="none"/><path d="M2 2.3 H4.5 M2 3.6 H3.8" stroke="#333" stroke-width="0.6"/></svg>
<div class="a" style="left:133.8px;top:256.1px;font-size:6.8px;line-height:8px;color:#222;-webkit-text-stroke:0.1px #222">Feedback</div>
<svg class="a" style="left:122.5px;top:267.59999999999997px" width="7" height="7" viewBox="0 0 7 7"><circle cx="3.5" cy="1.9" r="1.4" stroke="#333" stroke-width="0.9" fill="none"/><path d="M1 6.6 V5.4 Q1 4.1 2.3 4.1 H4.7 Q6 4.1 6 5.4 V6.6 Z" stroke="#333" stroke-width="0.9" fill="none"/></svg>
<div class="a" style="left:133.8px;top:267.7px;font-size:6.8px;line-height:8px;color:#222;-webkit-text-stroke:0.1px #222">Peer-to-peer</div>
<svg class="a" style="left:122.5px;top:305.2px" width="7" height="7" viewBox="0 0 7 7"><path d="M4.5 0.8 L1.8 3.9 H3.6 L2.6 6.6 L5.4 3.2 H3.7 Z" stroke="#333" stroke-width="0.7" fill="none"/></svg>
<div class="a" style="left:133.8px;top:305.3px;font-size:6.8px;line-height:8px;color:#222;-webkit-text-stroke:0.1px #222">Advanced</div>
<svg class="a" style="left:122.5px;top:317.7px" width="7" height="7" viewBox="0 0 7 7"><path d="M1.5 0.8 V3.8 Q1.5 4.8 2.5 4.8 H6 M4.6 3.5 L6 4.8 L4.6 6.1" stroke="#333" stroke-width="0.8" fill="none"/></svg>
<div class="a" style="left:133.8px;top:317.8px;font-size:6.8px;line-height:8px;color:#222;-webkit-text-stroke:0.1px #222">Import slide</div>
<svg class="a" style="left:153px;top:214px" width="6" height="9" viewBox="0 0 6 9"><path d="M0.5 0.5 L0.5 7 L2 5.6 L3.3 8.3 L4.3 7.8 L3.1 5.2 L5.2 5.1 Z" fill="#111" stroke="#eee" stroke-width="0.4"/></svg>

<div class="a" style="left:108px;top:58px;width:503px;height:360px;border-radius:3px;pointer-events:none;background:linear-gradient(to bottom, rgba(0,0,0,0) 0%, rgba(0,0,0,0) 45%, rgba(0,0,0,0.03) 60%, rgba(0,0,0,0.065) 75%, rgba(0,0,0,0.10) 90%, rgba(0,0,0,0.145) 100%)"></div>

</div></body></html>
